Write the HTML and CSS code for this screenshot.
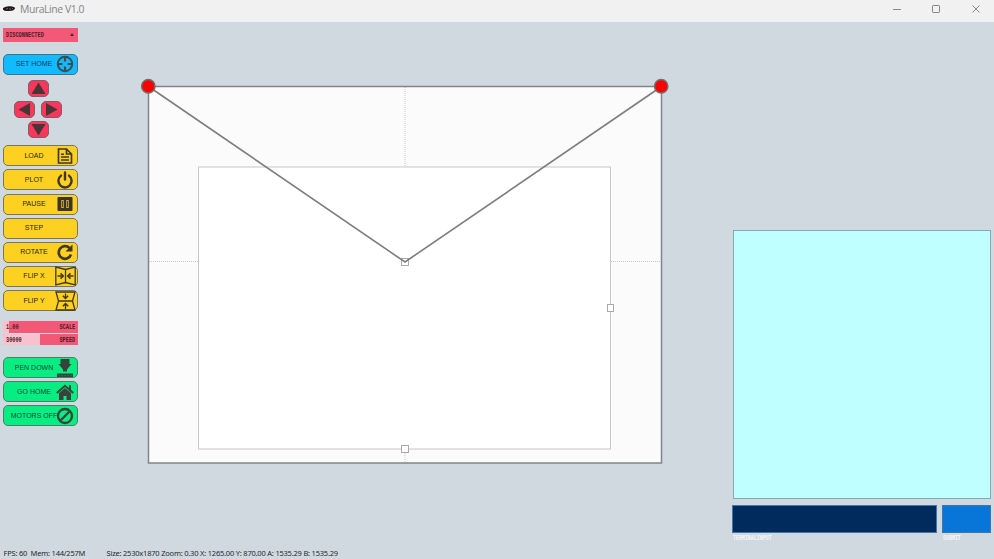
FILE: index.html
```html
<!DOCTYPE html>
<html lang="en">
<head>
<meta charset="utf-8">
<title>MuraLine V1.0</title>
<link rel="stylesheet" href="styles.css">
</head>
<body>
<header class="titlebar">
  <svg class="logo" viewBox="0 0 12 6"><path d="M0 2Q3 0 7 .3Q12 .5 12 2.5Q11 5 6 5Q1 5.500 0 3.500Z" fill="#18191b"/><path d="M3 3l2-.5M6 3h2M9 2.500h1" stroke="#b85260" stroke-width=".9"/></svg>
  <h1>MuraLine V1.0</h1>
  <svg class="window-controls" viewBox="0 0 90 12" fill="none" stroke="#85898c"><path d="M1 6.500h8M80.500 2.500l7 7m0-7l-7 7"/><rect x="40.500" y="2.500" width="7" height="7" rx=".6"/></svg>
</header>
<main class="workspace">
  <aside class="sidebar">
    <div class="dropdown"><span class="pixel">DISCONNECTED</span><i class="caret"></i></div>
    <button class="btn blue home"><span>SET HOME</span><svg viewBox="0 0 18 18" fill="none" stroke="#404a50"><circle cx="9" cy="9" r="7.200" stroke-width="2"/><path d="M9 2v4.500M9 11.500v4.500M2 9h4.500M11.500 9h4.500" stroke-width="2.200"/></svg></button>
    <div class="arrows">
      <button class="arrow up"><svg viewBox="0 0 19 15"><path d="M9.500 1.500l7 11.500h-14z"/></svg></button>
      <button class="arrow left"><svg viewBox="0 0 19 15"><path d="M3.500 7.500l11.500-6.500v13z"/></svg></button>
      <button class="arrow right"><svg viewBox="0 0 19 15"><path d="M15.500 7.500L4 1v13z"/></svg></button>
      <button class="arrow down"><svg viewBox="0 0 19 15"><path d="M9.500 13.500l7-11.500h-14z"/></svg></button>
    </div>
    <div class="stack">
      <button class="btn yellow"><span>LOAD</span><svg viewBox="0 0 18 18" fill="none" stroke="#40391f"><path d="M2.500 2h8l5 5v9h-13zM10.500 2v5h5" stroke-width="1.700"/><path d="M5 7.200h3M5 10h8M5 13h8" stroke-width="1.400"/></svg></button>
      <button class="btn yellow"><span>PLOT</span><svg viewBox="0 0 18 18" fill="none" stroke="#40391f" stroke-width="2.400" stroke-linecap="round"><path d="M5 4.600a6.600 6.600 0 1 0 8 0M9 1.500v7"/></svg></button>
      <button class="btn yellow"><span>PAUSE</span><svg viewBox="0 0 18 18"><rect x="1.500" y="2" width="15" height="14" rx="1" fill="#39352a"/><path d="M6.500 5v8M11.500 5v8" stroke="#d7af27" stroke-width="2.600"/><path d="M6.500 6v6M11.500 6v6" stroke="#39352a" stroke-width=".8"/></svg></button>
      <button class="btn yellow"><span>STEP</span></button>
      <button class="btn yellow"><span>ROTATE</span><svg viewBox="0 0 18 18" fill="none" stroke="#40391f"><path d="M13.500 5a6.300 6.300 0 1 0 1.500 6.500" stroke-width="2.700"/><path d="M16.500 1.500v7h-7z" fill="#40391f" stroke="none"/></svg></button>
      <button class="btn yellow"><span>FLIP X</span><svg class="wide" viewBox="0 0 21 20" fill="none" stroke="#40391f" stroke-width="1.300"><path d="M.8 1l9.700 2.500L20.200 1v18l-9.700-2.500L.8 19zM10.500 3.500v13M2.500 10h5.500M18.500 10H13"/><path d="M5.500 7.300L8.300 10l-2.800 2.700M15.500 7.300L12.700 10l2.800 2.700" stroke-width="1.600"/></svg></button>
      <button class="btn yellow"><span>FLIP Y</span><svg class="wide" viewBox="0 0 21 20" fill="none" stroke="#40391f" stroke-width="1.300"><path d="M1 1h19l-2.500 9L20 19H1l2.500-9zM3.500 10h14M10.500 2.500V7.500M10.500 18v-5.500"/><path d="M7.800 4.700l2.700 2.700 2.700-2.700M7.800 15.300l2.700-2.700 2.700 2.700" stroke-width="1.500"/></svg></button>
    </div>
    <div class="sliders">
      <div class="slider scale"><span class="pixel">1.00</span><span class="pixel end">SCALE</span></div>
      <div class="slider speed"><span class="pixel">30000</span><span class="pixel end">SPEED</span></div>
    </div>
    <div class="stack">
      <button class="btn green"><span>PEN DOWN</span><svg viewBox="0 0 18 18" fill="#38433b"><path d="M4.500 0h9v5h2l-4.500 5.500v2H7v-2L2.500 5h2zM1 14.500h16v4H1z"/><path d="M2 16.500h14" stroke="#1f9258" stroke-width=".5" stroke-dasharray="2 1"/></svg></button>
      <button class="btn green"><span>GO HOME</span><svg viewBox="0 0 18 18" fill="#38433b"><path d="M3 10L9 5l6 5v7h-4.500v-4h-3v4H3z"/><path d="M.8 10L9 2.800l8.200 7.200M14 2v4.500" fill="none" stroke="#38433b" stroke-width="2"/></svg></button>
      <button class="btn green"><span>MOTORS OFF</span><svg viewBox="0 0 18 18" fill="none" stroke="#38433b" stroke-width="2.300"><circle cx="9" cy="9" r="7"/><path d="M4.500 13.500l9-9"/></svg></button>
    </div>
  </aside>
  <svg class="board" viewBox="78 22 655 523" fill="none">
    <rect x="148.500" y="86.500" width="513" height="376.500" fill="#fbfbfb"/>
    <path d="M405 87v375M149 261.500h512" stroke="#bbb" stroke-width=".8" stroke-dasharray="1 1"/>
    <rect x="198.500" y="167" width="412" height="282" fill="#fff" stroke="#c8c8c8" stroke-width="1"/>
    <rect x="148.500" y="86.500" width="513" height="376.500" stroke="#838485" stroke-width="1.500"/>
    <g stroke="#aaa" stroke-width="1"><rect x="401.500" y="258.500" width="7" height="7"/><rect x="607.500" y="304.500" width="6" height="7" fill="#fff"/><rect x="401.500" y="445.500" width="7" height="7" fill="#fff"/></g>
    <path d="M148.500 86.500L405 262L661.500 86.500" stroke="#7b7d7e" stroke-width="1.600"/>
    <g fill="#fa0000" stroke="#756c6c" stroke-width="1.500"><circle cx="148.300" cy="86.300" r="6.700"/><circle cx="661.200" cy="86.300" r="6.700"/></g>
  </svg>
  <section class="console">
    <div class="log"></div>
    <div class="entry">
      <div class="field"><div class="input"></div><span class="pixel">TERMINALINPUT</span></div>
      <div class="field send"><div class="submit"></div><span class="pixel">SUBMIT</span></div>
    </div>
  </section>
</main>
<footer class="status"><span class="perf">FPS: 60&nbsp; Mem: 144/257M</span><span class="coords">Size: 2530x1870 Zoom: 0.30 X: 1265.00 Y: 870.00 A: 1535.29 B: 1535.29</span></footer>
</body>
</html>
```
FILE: styles.css
```css
* { box-sizing: border-box; }
body {
  margin: 0;
  height: 559px;
  display: flex;
  flex-direction: column;
  overflow: hidden;
  background: #d1d9e0;
  font-family: "Liberation Sans", Arial, sans-serif;
}
.titlebar {
  height: 22px;
  flex: none;
  display: flex;
  align-items: center;
  padding: 0 12px 4px 3px;
  background: #f1f1f1;
}
.logo { width: 12px; height: 6px; }
h1 {
  margin: 0 auto 0 5px;
  font: 10.4px/18px "Open Sans", sans-serif;
  letter-spacing: -.42px;
  color: #858585;
}
.window-controls { width: 90px; height: 12px; }
.workspace { height: 523px; flex: none; display: flex; }
.sidebar { width: 78px; padding: 6px 0 0 3px; flex: none; }
.pixel {
  display: block;
  font: bold 7.4px/8px "Liberation Mono", monospace;
  transform: scaleX(.71);
  transform-origin: left center;
  white-space: nowrap;
  color: #4a1d2a;
}
.pixel.end { transform-origin: right center; }
.dropdown {
  height: 14px;
  display: flex;
  align-items: center;
  justify-content: space-between;
  padding: 0 4px 0 2.5px;
  background: #f45877;
}
.caret {
  margin-bottom: 1px;
  border: 2px solid transparent;
  border-top: 0;
  border-bottom: 3px solid #4b2930;
}
.btn {
  width: 75px;
  height: 21px;
  display: flex;
  align-items: center;
  position: relative;
  padding: 0;
  border: 1px solid #77765f;
  border-radius: 5px;
  font: 7px/8px "Liberation Sans", sans-serif;
  color: #292713;
}
.btn span { width: 60px; text-align: center; white-space: nowrap; flex: none; }
.btn svg { position: absolute; right: 3px; width: 18px; height: 18px; }
.btn svg.wide { right: 1px; width: 21px; height: 20px; }
.blue { background: #12baff; border-color: #45728f; color: #10405f; }
.yellow { background: #fdd022; }
.green { background: #08ed82; border-color: #4e8068; color: #104c30; }
.home { margin-top: 11.5px; }
.arrows {
  display: grid;
  grid-template-columns: 21px 21px;
  grid-template-rows: repeat(3, 17px);
  gap: 3.3px 6px;
  width: 48px;
  margin: 5.9px 0 7.3px 11px;
}
.arrow {
  width: 21px;
  height: 17px;
  padding: 0;
  border: 1px solid #835c67;
  border-radius: 5px;
  background: #f9365b;
}
.arrow svg { display: block; width: 19px; height: 15px; fill: #4b3435; }
.up, .down { grid-column: 1 / 3; justify-self: center; }
.stack { display: flex; flex-direction: column; gap: 3.15px; }
.sliders { display: flex; flex-direction: column; gap: 1px; margin: 10px 0 12px; }
.slider {
  height: 11.5px;
  display: flex;
  align-items: center;
  justify-content: space-between;
  padding: 1px 3px 0 2.5px;
}
.scale { background: linear-gradient(90deg, #f9c1cd 6px, #f45877 6px); }
.speed { background: linear-gradient(90deg, #f9c1cd 37px, #f45877 37px); }
.board { width: 655px; height: 523px; flex: none; }
.console { width: 261px; padding: 208px 3px 0 0; flex: none; }
.log { height: 269px; background: #bfffff; border: 1px solid #83a9b6; }
.entry { display: flex; gap: 5px; margin: 6px 0 0 -1px; }
.field { width: 205px; }
.send { width: 49px; }
.input, .submit { height: 28px; border: 1px solid #3e78aa; }
.input { background: #002b5c; }
.submit { background: #0875d9; }
.field .pixel { color: #f4f6f8; margin: 1px 0 0 1px; transform: scaleX(.67); }
.status {
  height: 14px;
  display: flex;
  gap: 22px;
  padding-left: 3.5px;
  font: 7.5px/17px "Noto Sans", sans-serif;
  letter-spacing: -.21px;
  white-space: pre;
  color: #252a2d;
}
.perf { width: 81px; }
```
